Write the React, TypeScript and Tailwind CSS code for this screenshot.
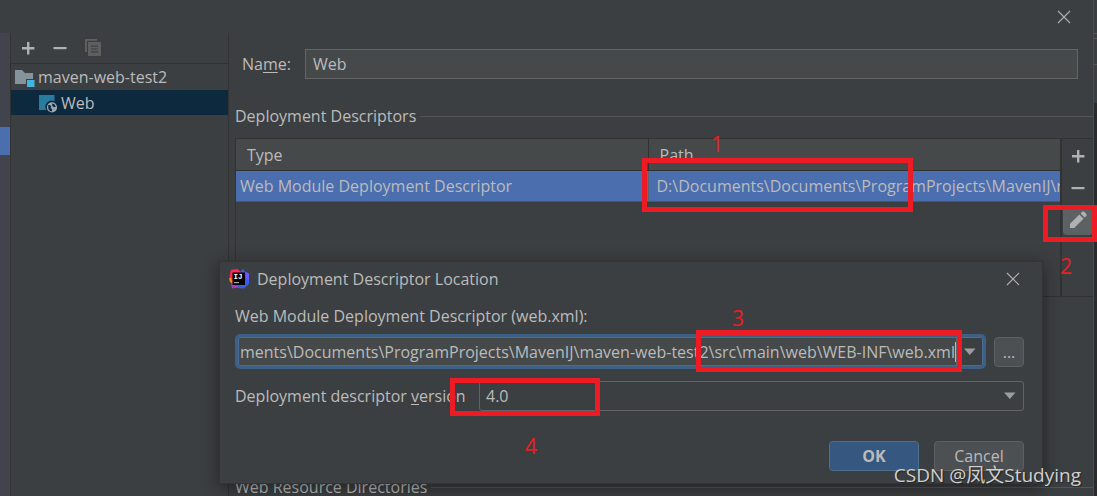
import type { ReactNode } from 'react';

const DESCRIPTOR = 'D:\\Documents\\Documents\\ProgramProjects\\MavenIJ\\maven-web-test2\\src\\main\\web\\WEB-INF\\web.xml';
const LOCATION = 'ments\\Documents\\ProgramProjects\\MavenIJ\\maven-web-test2\\src\\main\\web\\WEB-INF\\web.xml';

function PlusIcon() {
  return (
    <svg width="20" height="20" viewBox="0 0 20 20" fill="#afb1b3" aria-hidden="true">
      <path d="M9 4h2.4v5h5v2.4h-5v5H9v-5H4V9h5z" />
    </svg>
  );
}

function MinusIcon() {
  return (
    <svg width="20" height="20" viewBox="0 0 20 20" fill="#afb1b3" aria-hidden="true">
      <path d="M3.5 9h13v2.2h-13z" />
    </svg>
  );
}

function CopyIcon() {
  return (
    <svg width="20" height="20" viewBox="0 0 20 20" fill="#5e6060" aria-hidden="true">
      <path d="M3 1h12v1.8H5V14H3z" />
      <path fillRule="evenodd" d="M6 4h13v14H6zM9 7.6v1.2h7V7.6zM9 10.4v1.2h7v-1.2zM9 13.2v1.2h7v-1.2z" />
    </svg>
  );
}

function PencilIcon() {
  return (
    <svg width="20" height="20" viewBox="0 0 20 20" fill="#afb1b3" aria-hidden="true">
      <path d="M2 18v-4.2L11.4 4.6l4.1 4.1L6.2 18z" />
      <path d="M12.6 3.4l1.6-1.6q1-.8 2 0l2.1 2.1q.8 1 0 2l-1.6 1.6z" />
    </svg>
  );
}

function CloseIcon() {
  return (
    <svg width="14" height="14" viewBox="0 0 14 14" stroke="#afb1b3" strokeWidth="1.1" aria-hidden="true">
      <path d="M1 1l12 12M13 1L1 13" />
    </svg>
  );
}

function ModuleIcon() {
  return (
    <svg width="20" height="20" viewBox="0 0 20 20" aria-hidden="true" className="flex-none">
      <path d="M0 3h7l3 3h8v6h-7v5H0z" fill="#87939a" />
      <path d="M12 13h7.5v7H12z" fill="#40b6e0" />
    </svg>
  );
}

function WebFacetIcon() {
  return (
    <svg width="20" height="20" viewBox="0 0 20 20" aria-hidden="true" className="flex-none">
      <path d="M1 2h15.5v6.6A6 6 0 0 0 8.4 17H1z" fill="#2a7c9f" />
      <circle cx="14" cy="14.4" r="5.1" fill="#9aa7b0" />
      <path
        d="M10.2 12.2c1.2-.4 2.4.2 3 1.2l-.6 1.4 1.6 1.4-.5 2.2c-2.3-.2-3.9-2.2-3.5-6.2zM14.2 10.6l2.2.6 1.4 2.6-1.8.4-1.8-1.4z"
        fill="#0d293e"
      />
    </svg>
  );
}

function IdeaLogo() {
  return (
    <svg width="20" height="20" viewBox="0 0 20 20" aria-hidden="true" className="flex-none">
      <path d="M0 9.5L3 7l3 3-1.5 6L1 13z" fill="#fc801d" />
      <path d="M2 .8L8.5 0 12 3v5L4 12 .5 7z" fill="#fe2857" />
      <path d="M2 15l4-3 5 6-8 1.6z" fill="#a63cc4" />
      <path d="M11.5 2.5L14 0l2.5 3L20 4.5V15l-5 4.5L8 19l4-6z" fill="#3b5ce8" />
      <path d="M16.5 3L20 4.5V12l-4-4z" fill="#6b57ff" />
      <rect x="3.5" y="3.5" width="12.5" height="12.5" fill="#000" />
      <text x="4.4" y="10.2" fontSize="7.5" fontWeight="700" fontFamily="Liberation Mono, monospace" fill="#fff">
        IJ
      </text>
      <rect x="5" y="13" width="5" height="1.2" fill="#aaa" />
    </svg>
  );
}

function DropArrow() {
  return (
    <svg width="12" height="8" viewBox="0 0 12 8" fill="#9a9da0" aria-hidden="true">
      <path d="M0 .5h11.5L5.8 7z" />
    </svg>
  );
}

function IconButton({ label, className = '', children }: { label: string; className?: string; children: ReactNode }) {
  return (
    <button type="button" aria-label={label} className={`flex flex-none items-center justify-center ${className}`}>
      {children}
    </button>
  );
}

function SectionTitle({ children }: { children: ReactNode }) {
  return (
    <div className="flex items-center gap-1">
      <h2>{children}</h2>
      <span className="h-px flex-1 bg-[#555555]" />
    </div>
  );
}

function Sidebar() {
  return (
    <aside className="flex w-[219px] flex-none flex-col border-x border-[#323232]">
      <div className="flex h-[31px] items-center gap-3 border-b border-[#323232] pl-[7px]">
        <IconButton label="Add">
          <PlusIcon />
        </IconButton>
        <IconButton label="Remove">
          <MinusIcon />
        </IconButton>
        <IconButton label="Copy">
          <CopyIcon />
        </IconButton>
      </div>
      <ul>
        <li className="flex h-[26px] items-center gap-[3px] pl-1">
          <ModuleIcon />
          maven-web-test2
        </li>
        <li className="flex h-[25px] items-center gap-[3px] bg-[#0d293e] pl-[27px]">
          <WebFacetIcon />
          Web
        </li>
      </ul>
    </aside>
  );
}

function DescriptorTable() {
  return (
    <div className="flex h-[159px] border-y border-l border-[#323232]">
      <div className="min-w-0 flex-1">
        <table className="w-full table-fixed border-collapse text-left">
          <thead>
            <tr className="h-[31px] border-b border-[#323232] bg-[#45494a]">
              <th className="w-1/2 border-r border-[#323232] pt-[2px] pl-[11px] font-normal">Type</th>
              <th className="pt-[2px] pl-[11px] font-normal">Path</th>
            </tr>
          </thead>
          <tbody>
            <tr className="h-[31px] border-b border-[#555555] bg-[#4b6eaf]">
              <td className="border-r border-[#5a6374] pl-1">Web Module Deployment Descriptor</td>
              <td className="overflow-hidden pl-2 whitespace-nowrap">{DESCRIPTOR}</td>
            </tr>
          </tbody>
        </table>
      </div>
      <div className="flex w-[33px] flex-none flex-col items-center gap-[2px] border-l-2 border-[#323232] pt-[2px]">
        <IconButton label="Add descriptor" className="size-[30px]">
          <PlusIcon />
        </IconButton>
        <IconButton label="Remove descriptor" className="size-[30px]">
          <MinusIcon />
        </IconButton>
        <IconButton label="Edit descriptor" className="size-[30px] rounded bg-[#5c6164]">
          <PencilIcon />
        </IconButton>
      </div>
    </div>
  );
}

function LocationDialog() {
  return (
    <section
      role="dialog"
      aria-labelledby="dialog-title"
      className="absolute top-[261px] right-[54px] left-[219px] border border-[#323436] bg-[#3c3f41] pr-[18px] pb-3 pl-[15px] shadow-[0_4px_16px_rgba(0,0,0,0.45)]"
    >
      <header className="-ml-[6px] flex h-[34px] items-center gap-2">
        <IdeaLogo />
        <h1 id="dialog-title" className="flex-1">
          Deployment Descriptor Location
        </h1>
        <IconButton label="Close dialog" className="mr-1">
          <CloseIcon />
        </IconButton>
      </header>

      <label htmlFor="location" className="block h-[38px] pt-2 leading-6">
        Web Module Deployment Descriptor (web.xml):
      </label>
      <div className="flex items-center gap-2">
        <div className="flex h-[35px] min-w-0 flex-1 items-stretch overflow-hidden rounded-[5px] border-[3px] border-[#3d6185] outline-1 -outline-offset-4 outline-[#466d94]">
          <div className="flex min-w-0 flex-1 items-center overflow-hidden border-r border-[#646464] bg-[#45494a] pl-[2px]">
            <input
              id="location"
              type="text"
              defaultValue={LOCATION}
              className="field-sizing-content min-w-0 bg-transparent outline-none"
            />
            <span className="h-5 w-px flex-none bg-[#bbbbbb]" />
          </div>
          <IconButton label="Recent locations" className="w-[26px]">
            <DropArrow />
          </IconButton>
        </div>
        <button type="button" className="size-[30px] flex-none rounded border border-[#5e6060] bg-[#4c5052]">
          ...
        </button>
      </div>

      <div className="mt-3 flex items-center">
        <label htmlFor="version" className="w-[244px] flex-none">
          Deployment descriptor <span className="underline underline-offset-2">v</span>ersion
        </label>
        <div className="relative flex flex-1 items-center">
          <select
            id="version"
            defaultValue="4.0"
            className="h-[30px] w-full appearance-none rounded-[3px] border border-[#646464] bg-[#3c3f41] pl-[6px]"
          >
            <option>4.0</option>
          </select>
          <span className="pointer-events-none absolute right-2">
            <DropArrow />
          </span>
        </div>
      </div>

      <footer className="mt-[30px] flex justify-end gap-[15px]">
        <button type="button" className="h-[30px] w-[90px] rounded border border-[#4c708c] bg-[#365880] font-bold">
          OK
        </button>
        <button type="button" className="h-[30px] w-[90px] rounded border border-[#5e6060] bg-[#4c5052]">
          Cancel
        </button>
      </footer>
    </section>
  );
}

// Red frames and step numbers drawn over the window
function Annotations() {
  return (
    <div className="pointer-events-none absolute inset-0 text-[21px] leading-6 text-[#ed1c24]">
      <div className="absolute top-[158px] left-[642px] h-[54px] w-[271px] border-[5px] border-[#ed1c24]" />
      <div className="absolute top-[205px] right-0 h-[37px] w-[54px] border-[5px] border-[#ed1c24]" />
      <div className="absolute top-[330px] left-[696px] h-[42px] w-[266px] border-[5px] border-[#ed1c24]" />
      <div className="absolute top-[378px] left-[450px] h-[38px] w-[150px] border-[5px] border-[#ed1c24]" />
      <span className="absolute top-[132px] left-[711px]">1</span>
      <span className="absolute top-[254px] left-[1060px]">2</span>
      <span className="absolute top-[306px] left-[732px]">3</span>
      <span className="absolute top-[434px] left-[525px]">4</span>
    </div>
  );
}

export default function App() {
  return (
    <div className="relative flex h-screen overflow-hidden bg-[#3c3f41] font-['Open_Sans','Noto_Sans_CJK_SC',sans-serif] text-[16px] leading-6 text-[#bbbbbb]">
      <div className="flex min-w-0 flex-1 flex-col">
        <header className="flex h-[33px] flex-none items-center justify-end pr-[22px]">
          <IconButton label="Close">
            <CloseIcon />
          </IconButton>
        </header>
        <div className="flex min-h-0 flex-1">
          <nav className="w-[10px] flex-none bg-[#42444d] pt-[94px]">
            <div className="h-7 bg-[#4b6eaf]" />
          </nav>
          <Sidebar />
          <main className="min-w-0 flex-1 pt-4 pl-[6px]">
            <div className="flex items-center pr-[15px] pl-[7px]">
              <label htmlFor="name" className="w-[63px] flex-none">
                Na<span className="underline underline-offset-2">m</span>e:
              </label>
              <input
                id="name"
                type="text"
                defaultValue="Web"
                className="h-[30px] min-w-0 flex-1 border border-[#646464] bg-[#45494a] px-[7px] outline-none"
              />
            </div>
            <div className="mt-[25px] mb-[10px]">
              <SectionTitle>Deployment Descriptors</SectionTitle>
            </div>
            <DescriptorTable />
            <div className="mt-[178px]">
              <SectionTitle>Web Resource Directories</SectionTitle>
            </div>
          </main>
        </div>
      </div>
      <div className="flex w-1 flex-none flex-col border-l border-[#4a4d4f] bg-[#2b2b2b]">
        <div className="h-[33px] bg-[#3c3f41]" />
        <div className="h-[6px] border-y border-[#555555] bg-[#3c3f41]" />
        <div className="h-[26px] border-b border-[#555555] bg-[#3c3f41]" />
        <div className="h-[38px] bg-[#3c3f41]" />
      </div>
      <LocationDialog />
      <Annotations />
      <p className="absolute right-4 bottom-[7px] text-[19px] leading-7 text-[#d0d0d0] [text-shadow:1px_1px_1px_#222222]">
        CSDN @凤文Studying
      </p>
    </div>
  );
}
